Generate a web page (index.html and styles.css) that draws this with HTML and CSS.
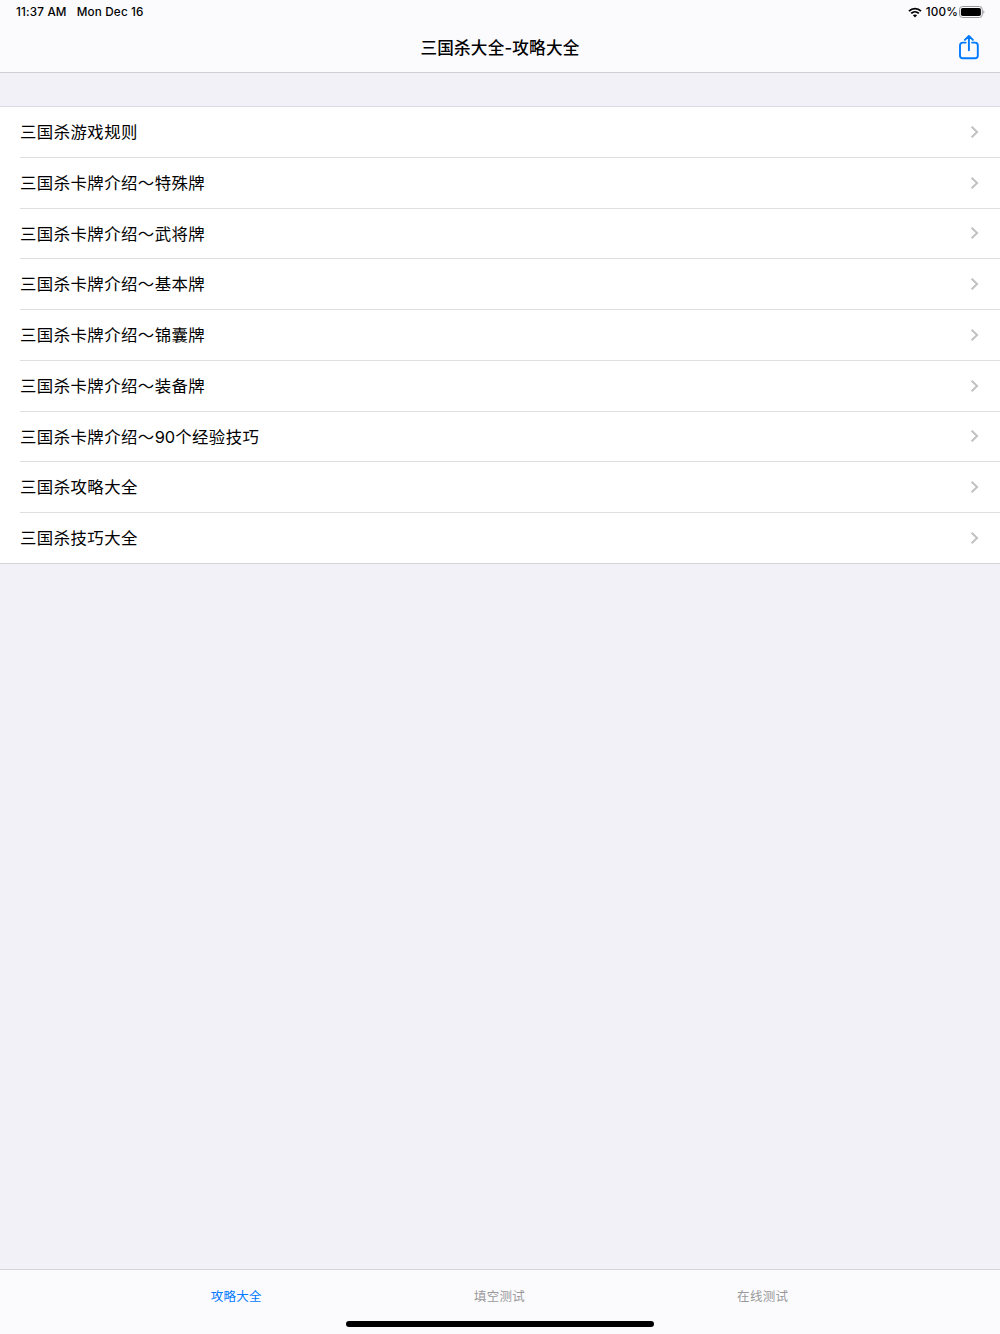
FILE: index.html
```
<!DOCTYPE html>
<html lang="zh-CN">
<head>
    <meta charset="UTF-8">
    <meta name="viewport" content="width=device-width, initial-scale=1.0">
    <title>三国杀大全-攻略大全</title>
    <link rel="stylesheet" href="styles.css">
</head>
<body>
    <!-- Header -->
    <header class="header">
        <div class="status-bar">
            <span class="time">11:37 AM</span>
            <span class="date">Mon Dec 16</span>
            <div class="status-right">
                <svg class="wifi" width="14" height="11" viewBox="0 0 14 11">
                    <path d="M1 4.1C4.4.8 9.6.8 13 4.1M3.2 6.4C5.4 4.3 8.6 4.3 10.8 6.4" fill="none" stroke="#000" stroke-width="1.9"/>
                    <path d="M7 10.4L4.9 8.2C6.1 7.1 7.9 7.1 9.1 8.2Z" fill="#000"/>
                </svg>
                <span class="percent">100%</span>
                <svg class="battery" width="26" height="12" viewBox="0 0 26 12">
                    <rect x="0.5" y="0.5" width="22.8" height="11" rx="3" fill="none" stroke="#98989b"/>
                    <rect x="1.9" y="1.9" width="20" height="8.2" rx="1.8" fill="#000"/>
                    <path d="M24.4 4.2C25.7 4.7 25.7 7.3 24.4 7.8Z" fill="#98989b"/>
                </svg>
            </div>
        </div>
        <div class="nav-bar">
            <h1>三国杀大全-攻略大全</h1>
            <button class="share" aria-label="分享">
                <svg width="20" height="26" viewBox="0 0 20 26">
                    <path d="M6.7 7.6H3.8Q1 7.6 1 10.4V20.5Q1 23.3 3.8 23.3H16Q18.8 23.3 18.8 20.5V10.4Q18.8 7.6 16 7.6H13.1M9.9 15.2V1.2M5.9 4.9L9.9 1L13.9 4.9" fill="none" stroke="#007aff" stroke-width="1.9" stroke-linecap="round" stroke-linejoin="round"/>
                </svg>
            </button>
        </div>
    </header>

    <!-- Article List -->
    <main class="content">
        <ul class="list">
            <li><a>三国杀游戏规则</a></li>
            <li><a>三国杀卡牌介绍～特殊牌</a></li>
            <li><a>三国杀卡牌介绍～武将牌</a></li>
            <li><a>三国杀卡牌介绍～基本牌</a></li>
            <li><a>三国杀卡牌介绍～锦囊牌</a></li>
            <li><a>三国杀卡牌介绍～装备牌</a></li>
            <li><a>三国杀卡牌介绍～<span class="num">90</span>个经验技巧</a></li>
            <li><a>三国杀攻略大全</a></li>
            <li><a>三国杀技巧大全</a></li>
        </ul>
    </main>

    <!-- Tab Bar -->
    <footer class="footer">
        <nav class="tabs">
            <a class="tab active">攻略大全</a>
            <a class="tab">填空测试</a>
            <a class="tab">在线测试</a>
        </nav>
        <div class="home-bar"></div>
    </footer>

    <script>
        // Add the arrow to every row
        document.querySelectorAll('.list li').forEach(row => {
            row.insertAdjacentHTML('beforeend',
                '<svg class="arrow" width="9" height="14" viewBox="0 0 9 14"><path d="M1.6 1.7L7.1 7L1.6 12.3" fill="none" stroke="#c1c1c4" stroke-width="2"/></svg>');
        });
    </script>
</body>
</html>
```
FILE: styles.css
```
/* Global Styling */
* {
    box-sizing: border-box;
}
body {
    font-family: Inter, "Noto Sans CJK SC", sans-serif;
    margin: 0;
    background-color: #f2f1f7;
    color: #000;
    display: flex;
    flex-direction: column;
    height: 100vh;
}

/* Header */
.header {
    height: 73px;
    background-color: #fbfbfe;
    border-bottom: 1px solid #cfced3;
}
.status-bar {
    display: flex;
    align-items: center;
    height: 24px;
    padding: 0 15px 0 16px;
    font-size: 11.7px;
    font-weight: 500;
    letter-spacing: 0.17px;
}
.date {
    margin-left: 10px;
}
.status-right {
    display: flex;
    align-items: center;
    margin-left: auto;
}
.percent {
    margin: 0 1px 0 4px;
}
.nav-bar {
    display: grid;
    grid-template-columns: 1fr auto 1fr;
    align-items: center;
    height: 48px;
    padding: 0 21px;
}
h1 {
    grid-column: 2;
    margin: 0;
    font-size: 16.6px;
    line-height: 24px;
    font-weight: 500;
    letter-spacing: 0.2px;
}
.share {
    justify-self: end;
    height: 26px;
    padding: 0;
    border: none;
    background: none;
}

/* List */
.content {
    flex: 1;
    padding-top: 33px;
}
.list {
    margin: 0;
    padding: 0;
    list-style: none;
    background-color: white;
    border-top: 1px solid #dcdbe0;
    border-bottom: 1px solid #d5d5d9;
}
.list li {
    display: flex;
    align-items: center;
    justify-content: space-between;
    height: 50.75px;
    margin-left: 20px;
    padding-right: 21px;
    border-bottom: 1px solid #dfdfe1;
    font-size: 16.4px;
    letter-spacing: 0.44px;
}
.list li:last-child {
    height: 50px;
    border-bottom: none;
}
.list a {
    padding-bottom: 1.5px;
}
.num {
    letter-spacing: 0;
}

/* Tab Bar */
.footer {
    height: 65px;
    background-color: #fbfbfe;
    border-top: 1px solid #d7d6dc;
}
.tabs {
    display: flex;
    justify-content: center;
    gap: 212px;
    height: 51px;
    padding-right: 1px;
    align-items: center;
}
.tab {
    color: #999;
    font-size: 12.5px;
    letter-spacing: 0.3px;
}
.tab.active {
    color: #007aff;
}
.home-bar {
    width: 308px;
    height: 6px;
    margin: 0 auto;
    border-radius: 3px;
    background-color: #000;
}
```
